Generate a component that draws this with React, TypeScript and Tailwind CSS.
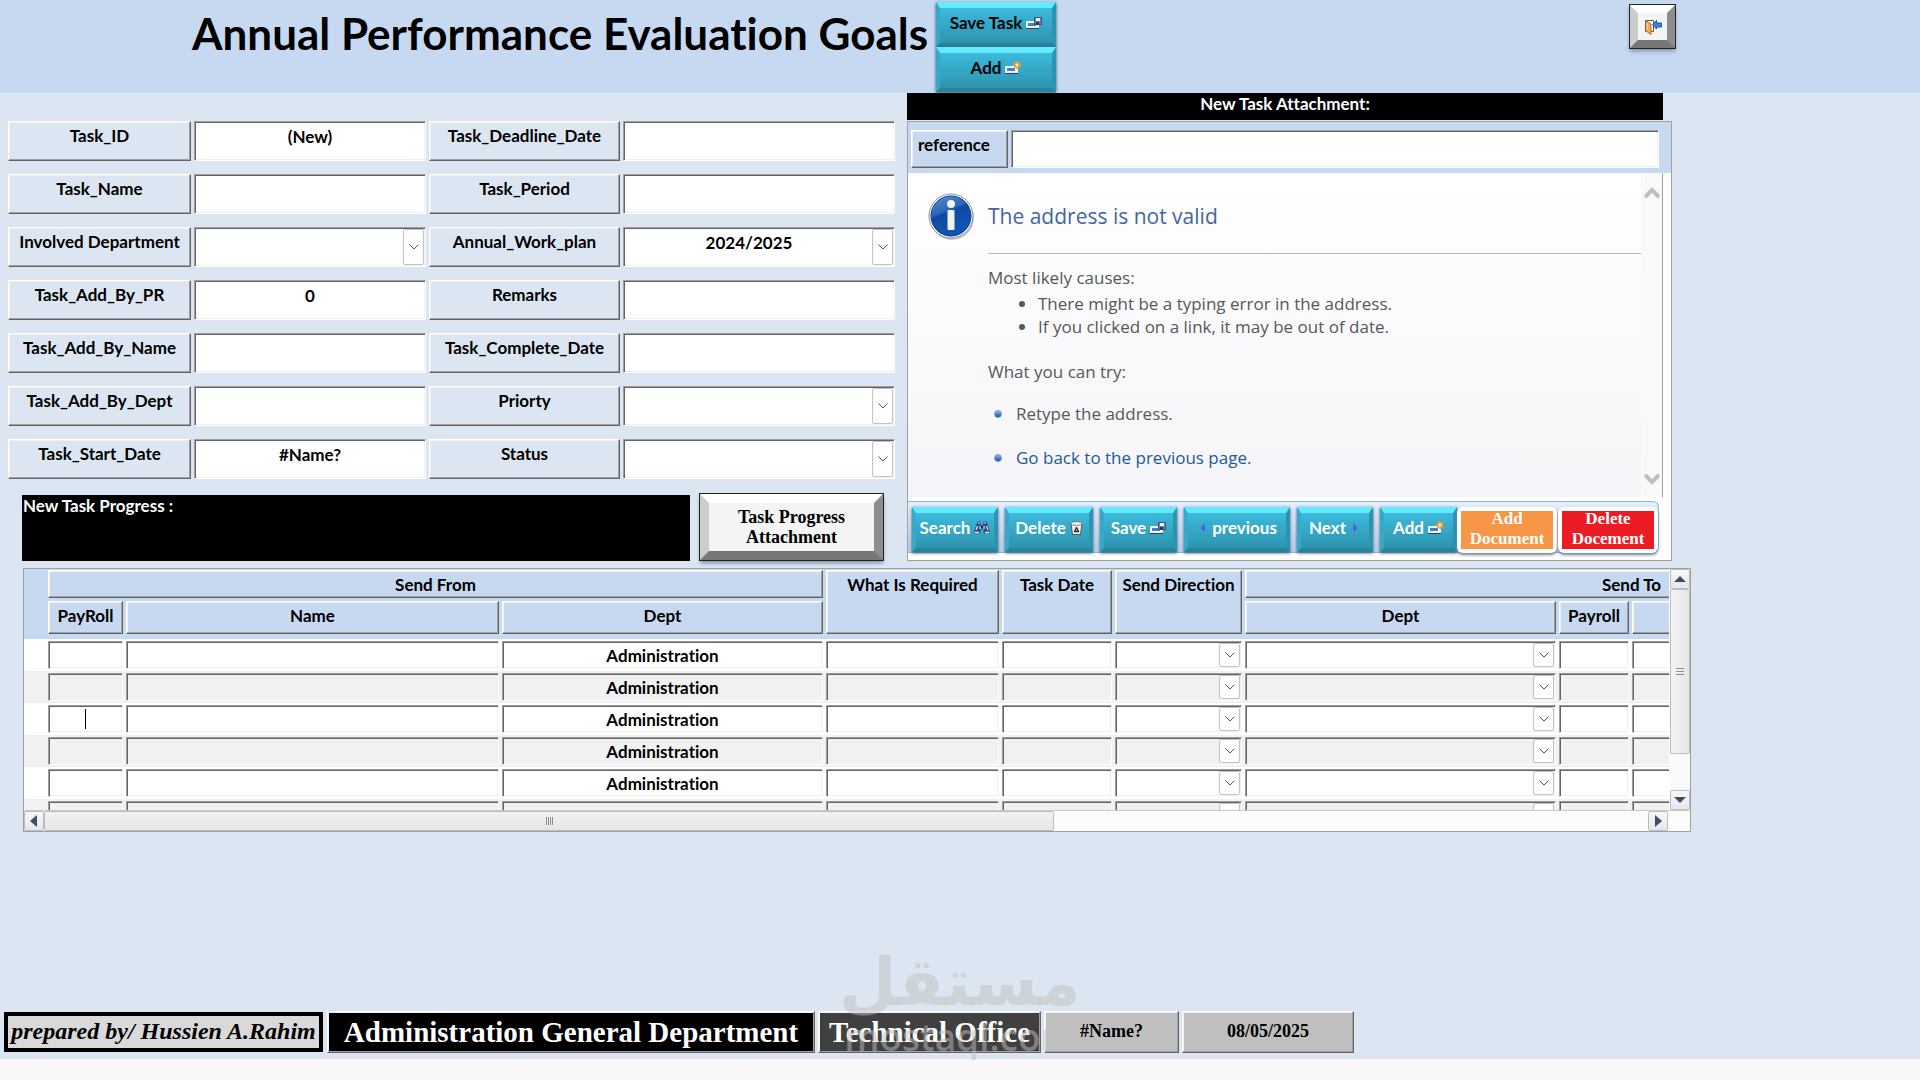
import type { ReactNode } from 'react'
import clsx from 'clsx'

const raised =
  'border border-t-white border-l-white border-b-[#646464] border-r-[#646464] shadow-[inset_-1px_-1px_0_#a0a0a0,inset_1px_1px_0_#f0f0f0]'
const sunken =
  'border border-t-[#a0a0a0] border-l-[#a0a0a0] border-b-white border-r-white shadow-[inset_1px_1px_0_#646464,inset_-1px_-1px_0_#f0f0f0]'

type Field = { id: string; label: string; value?: string; select?: boolean }

const fields: Field[] = [
  { id: 'task-id', label: 'Task_ID', value: '(New)' },
  { id: 'deadline', label: 'Task_Deadline_Date' },
  { id: 'task-name', label: 'Task_Name' },
  { id: 'period', label: 'Task_Period' },
  { id: 'involved', label: 'Involved Department', select: true },
  { id: 'workplan', label: 'Annual_Work_plan', value: '2024/2025', select: true },
  { id: 'add-pr', label: 'Task_Add_By_PR', value: '0' },
  { id: 'remarks', label: 'Remarks' },
  { id: 'add-name', label: 'Task_Add_By_Name' },
  { id: 'complete', label: 'Task_Complete_Date' },
  { id: 'add-dept', label: 'Task_Add_By_Dept' },
  { id: 'priority', label: 'Priorty', select: true },
  { id: 'start', label: 'Task_Start_Date', value: '#Name?' },
  { id: 'status', label: 'Status', select: true },
]

function SaveIcon() {
  return (
    <svg width="16" height="12" viewBox="0 0 16 12" className="shrink-0" aria-hidden="true">
      <rect x="0.5" y="4.5" width="12" height="6" fill="#fff" stroke="#e6eef8" />
      <rect x="2" y="6" width="8" height="3" fill="#3f7fd0" />
      <path d="M0 11.5h13" stroke="#3a3f55" />
      <rect x="8.5" y="0.5" width="7" height="7" fill="#6d80ac" stroke="#43527d" />
      <rect x="10" y="1" width="4" height="3" fill="#eef3fb" />
      <rect x="10" y="5" width="3" height="3" fill="#27355c" />
    </svg>
  )
}

function NewIcon() {
  return (
    <svg width="16" height="13" viewBox="0 0 16 13" className="shrink-0" aria-hidden="true">
      <rect x="0.5" y="5.5" width="12" height="6" fill="#fff" stroke="#e6eef8" />
      <rect x="2" y="7" width="8" height="3" fill="#3f7fd0" />
      <path d="M0 12.5h13" stroke="#3a3f55" />
      <path d="M12 0v8M8 4h8M9 1l6 6M15 1l-6 6" stroke="#f39a32" strokeWidth="1.6" />
      <circle cx="12" cy="4" r="1.4" fill="#fff3c4" />
    </svg>
  )
}

function BinocularsIcon() {
  return (
    <svg width="16" height="13" viewBox="0 0 16 13" className="shrink-0" aria-hidden="true">
      <path d="M3.5 0.5h3L7 6l-1 6.500H0.500V9z" fill="#2b4a86" />
      <path d="M9.500 0.500h3L15.500 9v3.500H10L9 6z" fill="#2b4a86" />
      <path d="M6.500 4.500h3v3h-3z" fill="#16284f" />
      <path d="M4 2h2M10 2h2M3.500 5l-1.500 4M12.500 5L14 9M6 5v3M10 5v3" stroke="#dce8fb" strokeWidth="1.200" />
      <path d="M1 11.500h4M11 11.500h4" stroke="#e6eefc" strokeWidth="1.500" />
    </svg>
  )
}

function TrashIcon() {
  return (
    <svg width="13" height="14" viewBox="0 0 13 14" className="shrink-0" aria-hidden="true">
      <path d="M1 2.500l1.500 11h8l1.500-11z" fill="#f2f2f2" stroke="#555" />
      <ellipse cx="6.500" cy="2.500" rx="5.500" ry="1.800" fill="#fff" stroke="#777" />
      <path d="M6.500 6.500l2 4h-4z" fill="none" stroke="#222" strokeWidth="1.300" strokeLinejoin="round" />
    </svg>
  )
}

function ArrowIcon({ left }: { left?: boolean }) {
  return (
    <svg width="7" height="12" viewBox="0 0 7 12" className="mx-0.5 shrink-0" aria-hidden="true">
      <path d={left ? 'M6.500 0.500v11L0.500 6z' : 'M0.500 0.500v11l6-5.500z'} fill="#2f74c8" stroke="#5b9be2" />
    </svg>
  )
}

function ExitIcon() {
  return (
    <svg width="18" height="16" viewBox="0 0 18 16" aria-hidden="true">
      <path d="M1.500 1.500h8v11h-8z" fill="#fff" stroke="#55585e" />
      <path d="M2 2l5 3v10.500L2 12z" fill="#f5ab55" stroke="#b96a1c" />
      <path d="M3 4v7" stroke="#fbe0b8" />
      <path d="M8.500 5.500l4-4v2.500h5v4h-5v2z" fill="#3d86df" stroke="#1f57a8" />
    </svg>
  )
}

function InfoIcon() {
  return (
    <svg width="46" height="48" viewBox="0 0 46 48" className="shrink-0" aria-hidden="true">
      <defs>
        <linearGradient id="orb" x1="0" y1="0" x2="0.400" y2="1">
          <stop offset="0" stopColor="#5f95da" />
          <stop offset="0.450" stopColor="#2763b8" />
          <stop offset="0.500" stopColor="#1149a2" />
          <stop offset="1" stopColor="#0d55b4" />
        </linearGradient>
      </defs>
      <circle cx="24" cy="25" r="22" fill="#c5c8cc" />
      <circle cx="23" cy="23" r="22" fill="#f5f7fa" stroke="#8e9297" />
      <circle cx="23" cy="23" r="20" fill="url(#orb)" stroke="#103f86" />
      <circle cx="23" cy="11" r="4" fill="#f2f2ef" />
      <rect x="19.500" y="17" width="7" height="20" rx="1" fill="#f2f2ef" />
    </svg>
  )
}

function Chevron() {
  return (
    <span className="pointer-events-none absolute top-0.5 right-0.5 bottom-0.5 flex w-[21px] items-center justify-center rounded-xs border border-[#c3c3c3] bg-[#fdfdfd]">
      <svg width="10" height="6" viewBox="0 0 10 6" fill="none" stroke="#555" aria-hidden="true">
        <path d="M0.500 0.500L5 5l4.500-4.500" />
      </svg>
    </span>
  )
}

function FieldRow({ id, label, value, select }: Field) {
  return (
    <>
      <label htmlFor={id} className={clsx(raised, 'h-10 pt-1 text-center leading-5 whitespace-nowrap')}>
        {label}
      </label>
      <div className="relative">
        {select ? (
          <>
            <select id={id} className={clsx(sunken, 'h-10 w-full appearance-none bg-white pr-5 pb-2 text-center')}>
              <option>{value}</option>
            </select>
            <Chevron />
          </>
        ) : (
          <input id={id} defaultValue={value} className={clsx(sunken, 'h-10 w-full bg-white pb-2.5 text-center')} />
        )}
      </div>
    </>
  )
}

function BlueButton({ children, className }: { children: ReactNode; className?: string }) {
  return (
    <button
      className={clsx(
        'flex h-[45px] items-center justify-center gap-1 border-x-4 border-t-6 border-b-4 border-t-[#63ecff] border-r-[#2c93b0] border-b-[#2b839b] border-l-[#35a9ca] bg-linear-to-b from-[#3cbadd] to-[#2e94ae] pb-1.5 whitespace-nowrap shadow-[0_1px_3px_#35546e]',
        className,
      )}
    >
      {children}
    </button>
  )
}

function Header() {
  return (
    <header className="flex h-[93px] items-start bg-[#c6d9f1]">
      <h1 className="ml-48 w-[744px] text-[44px] leading-[66px] whitespace-nowrap">Annual Performance Evaluation Goals</h1>
      <div className="flex w-30 flex-col pt-0.5">
        <BlueButton>
          Save Task <SaveIcon />
        </BlueButton>
        <BlueButton>
          Add <NewIcon />
        </BlueButton>
      </div>
      <div className="flex-1" />
      <button
        aria-label="Exit"
        className="mt-[5px] mr-[245px] flex h-[43px] w-[45px] items-center justify-center border-8 border-t-white border-r-[#8b8d91] border-b-[#777] border-l-[#cbcdcb] bg-[#f4f4f4] shadow-[0_0_0_1px_#222,0_3px_4px_#7d8ca3]"
      >
        <ExitIcon />
      </button>
    </header>
  )
}

function Bullet() {
  return <span className="h-2 w-2 shrink-0 rounded-full border border-[#6d95c9] bg-linear-to-b from-[#8db8ea] to-[#1450a3]" />
}

function AddressError() {
  return (
    <div className="mr-2 flex h-[324px] border-r border-[#a0a0a0] bg-linear-to-b from-white to-[#f5f5f9] font-['Open_Sans',sans-serif] font-normal text-[#575757]">
      <div className="flex flex-1 gap-3.5 pt-5 pl-5">
        <InfoIcon />
        <div className="flex-1">
          <h2 className="border-b border-[#b5b5b5] pt-1.5 pb-5 text-[21px] leading-[34px] text-[#4465a2]">The address is not valid</h2>
          <p className="pt-3 leading-6">Most likely causes:</p>
          <ul className="list-disc pt-0.5 pl-[50px] leading-[23px]">
            <li>There might be a typing error in the address.</li>
            <li>If you clicked on a link, it may be out of date.</li>
          </ul>
          <p className="pt-[22px] leading-6">What you can try:</p>
          <p className="flex items-center gap-3.5 pt-[18px] pl-1.5 leading-6">
            <Bullet />
            Retype the address.
          </p>
          <p className="flex items-center gap-3.5 pt-5 pl-1.5 leading-6">
            <Bullet />
            <a href="#back" className="text-[#1d5a98]">
              Go back to the previous page.
            </a>
          </p>
        </div>
      </div>
      <div className="flex w-[21px] flex-col items-center justify-between bg-[#f9f9f9] pt-3.5 pb-3">
        <svg width="16" height="12" viewBox="0 0 16 12" fill="none" stroke="#bfbfbf" strokeWidth="4" aria-hidden="true">
          <path d="M1 10l7-7 7 7" />
        </svg>
        <svg width="16" height="12" viewBox="0 0 16 12" fill="none" stroke="#bfbfbf" strokeWidth="4" aria-hidden="true">
          <path d="M1 2l7 7 7-7" />
        </svg>
      </div>
    </div>
  )
}

function DocButton({ children, className }: { children: ReactNode; className: string }) {
  return (
    <button className="h-[46px] w-[100px] rounded-md bg-white p-1 font-['Liberation_Serif',serif] shadow-[0_2px_3px_#6f7f96]">
      <span className={clsx('flex h-full flex-col justify-center pb-0.5 leading-5', className)}>{children}</span>
    </button>
  )
}

function Attachment() {
  return (
    <section>
      <h2 className="mr-[9px] h-[27px] bg-black text-center leading-[22px] text-white">New Task Attachment:</h2>
      <div className="mt-px border border-[#a0a0a0] bg-white">
        <div className="flex h-[51px] gap-[3px] bg-[#c6d9f1] py-2 pr-3 pl-[3px]">
          <label htmlFor="reference" className={clsx(raised, 'h-[38px] w-[97px] pt-1 pl-1.5 leading-5')}>
            reference
          </label>
          <input id="reference" className={clsx(sunken, 'h-[38px] flex-1 bg-white px-1')} />
        </div>
        <AddressError />
        <div className="mt-1 mr-3 mb-[7px] flex h-[52px] items-start justify-between rounded-r-md border border-l-0 border-[#8fb5da] bg-linear-to-b from-[#e6eefa] to-[#b9d0ec] pt-[5px] pl-1 text-white">
          <div className="flex gap-[7px]">
            <BlueButton className="w-[86px]">
              Search <BinocularsIcon />
            </BlueButton>
            <BlueButton className="w-[88px]">
              Delete <TrashIcon />
            </BlueButton>
            <BlueButton className="w-[77px]">
              Save <SaveIcon />
            </BlueButton>
            <BlueButton className="w-[106px]">
              <ArrowIcon left /> previous
            </BlueButton>
            <BlueButton className="w-[76px]">
              Next <ArrowIcon />
            </BlueButton>
            <BlueButton className="w-[77px]">
              Add <NewIcon />
            </BlueButton>
          </div>
          <div className="flex gap-px">
            <DocButton className="bg-[#f79646]">
              <span>Add</span>
              <span>Document</span>
            </DocButton>
            <DocButton className="bg-[#ed1c24]">
              <span>Delete</span>
              <span>Docement</span>
            </DocButton>
          </div>
        </div>
      </div>
    </section>
  )
}

function Th({ children, colSpan, rowSpan, tall }: { children?: ReactNode; colSpan?: number; rowSpan?: number; tall?: boolean }) {
  return (
    <th colSpan={colSpan} rowSpan={rowSpan} className={clsx('pr-[3px] align-top', rowSpan ? 'pt-px' : tall ? 'pb-[5px]' : 'pt-px pb-[3px]')}>
      <div className={clsx(raised, rowSpan ? 'h-16' : tall ? 'h-[33px]' : 'h-7', 'pt-1 leading-5 whitespace-nowrap')}>{children}</div>
    </th>
  )
}

const columns = ['PayRoll', 'Name', 'Dept', 'What Is Required', 'Task Date', 'Send Direction', 'To Dept', 'To Payroll', 'To Name']
const depts = ['Administration', 'Administration', 'Administration', 'Administration', 'Administration', '']

function ProgressTable() {
  return (
    <table className="w-[1997px] table-fixed border-collapse">
      <colgroup>
        <col className="w-6" />
        <col className="w-[78px]" />
        <col className="w-[376px]" />
        <col className="w-[324px]" />
        <col className="w-44" />
        <col className="w-[113px]" />
        <col className="w-[130px]" />
        <col className="w-[314px]" />
        <col className="w-[73px]" />
        <col className="w-[389px]" />
      </colgroup>
      <thead className="bg-[#c6d9f1]">
        <tr>
          <td rowSpan={2} />
          <Th colSpan={3}>Send From</Th>
          <Th rowSpan={2}>What Is Required</Th>
          <Th rowSpan={2}>Task Date</Th>
          <Th rowSpan={2}>Send Direction</Th>
          <Th colSpan={3}>Send To</Th>
        </tr>
        <tr>
          <Th tall>PayRoll</Th>
          <Th tall>Name</Th>
          <Th tall>Dept</Th>
          <Th tall>Dept</Th>
          <Th tall>Payroll</Th>
          <Th tall />
        </tr>
      </thead>
      <tbody>
        {depts.map((dept, row) => (
          <tr key={row} className="bg-white even:bg-[#f1f1f1]">
            <td />
            {columns.map((name, i) => (
              <td key={name} className="py-0.5 pr-[3px]">
                <div className="relative h-7">
                  {i === 5 || i === 6 ? (
                    <>
                      <select aria-label={name} className={clsx(sunken, 'block h-7 w-full appearance-none')} />
                      <Chevron />
                    </>
                  ) : (
                    <input
                      aria-label={name}
                      defaultValue={i === 2 ? dept : ''}
                      className={clsx(sunken, 'block h-7 w-full text-center')}
                    />
                  )}
                  {row === 2 && i === 0 && <span className="absolute inset-x-0 top-1 mx-auto h-5 w-px bg-black" />}
                </div>
              </td>
            ))}
          </tr>
        ))}
      </tbody>
    </table>
  )
}

function ScrollButton({ d, label }: { d: string; label: string }) {
  return (
    <button
      aria-label={label}
      className="flex h-5 w-5 shrink-0 items-center justify-center rounded-xs border border-[#b9bdc2] bg-linear-to-b from-[#f7f7f7] to-[#e6e8ea]"
    >
      <svg width="12" height="12" viewBox="0 0 12 12" fill="#3b5068" className="shrink-0" aria-hidden="true">
        <path d={d} />
      </svg>
    </button>
  )
}

function Progress() {
  return (
    <section className="mt-[7px] mr-[229px] ml-[23px] border border-[#a0a0a0] bg-[#fbfbfb]">
      <div className="flex h-[241px]">
        <div className="flex-1 overflow-hidden">
          <ProgressTable />
        </div>
        <div className="flex w-[21px] flex-col bg-[#fafafa] pl-px">
          <ScrollButton label="Scroll up" d="M6 3l6 6H0z" />
          <div className="flex h-[165px] flex-col items-center justify-center gap-0.5 rounded-xs border border-[#b9bdc2] bg-linear-to-r from-[#f3f4f4] to-[#e4e6e8]">
            <i className="h-px w-2 bg-[#8a8f94]" />
            <i className="h-px w-2 bg-[#8a8f94]" />
            <i className="h-px w-2 bg-[#8a8f94]" />
          </div>
          <div className="flex-1" />
          <ScrollButton label="Scroll down" d="M6 9l6-6H0z" />
        </div>
      </div>
      <div className="flex h-[21px] border-t border-[#c9c9c9] pr-[22px]">
        <ScrollButton label="Scroll left" d="M2 6l7-6v12z" />
        <div className="flex w-[1010px] items-center justify-center gap-px rounded-xs border border-[#b9bdc2] bg-linear-to-b from-[#f1f2f2] to-[#e4e6e8]">
          <i className="h-2 w-px bg-[#8a8f94]" />
          <i className="h-2 w-px bg-[#8a8f94]" />
          <i className="h-2 w-px bg-[#8a8f94]" />
          <i className="h-2 w-px bg-[#8a8f94]" />
        </div>
        <div className="flex-1" />
        <ScrollButton label="Scroll right" d="M10 6L3 0v12z" />
      </div>
    </section>
  )
}

function Footer() {
  return (
    <footer className="relative mt-auto flex h-12 items-start gap-[3px] pl-1 font-['Liberation_Serif',serif] whitespace-nowrap">
      <div className="mt-px mr-px h-10 w-[319px] border-4 border-black bg-[#d9d9d9] text-center text-2xl leading-[30px] italic">
        prepared by/ Hussien A.Rahim
      </div>
      <div className={clsx(raised, 'h-[42px] w-[488px] bg-black text-center text-[29px] leading-10 text-white')}>
        Administration General Department
      </div>
      <div className={clsx(raised, 'h-[42px] w-[223px] bg-[#404040] text-center text-[29px] leading-10 text-white')}>Technical Office</div>
      <div className={clsx(raised, 'h-[42px] w-[135px] bg-[#bfbfbf] text-center text-lg leading-[38px]')}>#Name?</div>
      <div className={clsx(raised, 'h-[42px] w-[172px] bg-[#bfbfbf] text-center text-lg leading-[38px]')}>08/05/2025</div>
      <div className="pointer-events-none absolute bottom-1 left-[845px] flex w-[230px] flex-col items-center text-[#bfbfbf]/50">
        <span lang="ar" className="font-['DejaVu_Sans',sans-serif] text-[66px] leading-[72px]">
          مستقل
        </span>
        <span className="font-['Open_Sans',sans-serif] text-[37px] leading-9 font-semibold">mostaql.com</span>
      </div>
    </footer>
  )
}

export default function App() {
  return (
    <div className="flex min-h-screen flex-col bg-[#dce6f2] font-['Lato',sans-serif] text-[17px] font-bold text-black [font-variant-ligatures:none]">
      <Header />
      <main className="pb-8">
        <div className="grid grid-cols-[907fr_765fr_248fr]">
          <div className="pt-7 pr-3 pl-2">
            <form className="grid grid-cols-[183fr_232fr_191fr_272fr] gap-x-[3px] gap-y-[13px]">
              {fields.map((field) => (
                <FieldRow key={field.id} {...field} />
              ))}
            </form>
            <div className="mt-3.5 flex gap-2.5 pr-3 pl-3.5">
              <h2 className="mt-0.5 h-[66px] flex-1 bg-black px-px leading-[22px] text-white">New Task Progress :</h2>
              <button className="mt-px flex h-[66px] w-[183px] flex-col items-center justify-center border-9 border-t-white border-r-[#8b8d91] border-b-[#777] border-l-[#cbcdcb] bg-[#f4f4f4] font-['Liberation_Serif',serif] text-lg leading-5 shadow-[0_0_0_1px_#222,0_3px_4px_#7d8ca3]">
                <span>Task Progress</span>
                <span>Attachment</span>
              </button>
            </div>
          </div>
          <Attachment />
        </div>
        <Progress />
      </main>
      <Footer />
      <div className="h-[21px] bg-[#f8f8f8]" />
    </div>
  )
}
